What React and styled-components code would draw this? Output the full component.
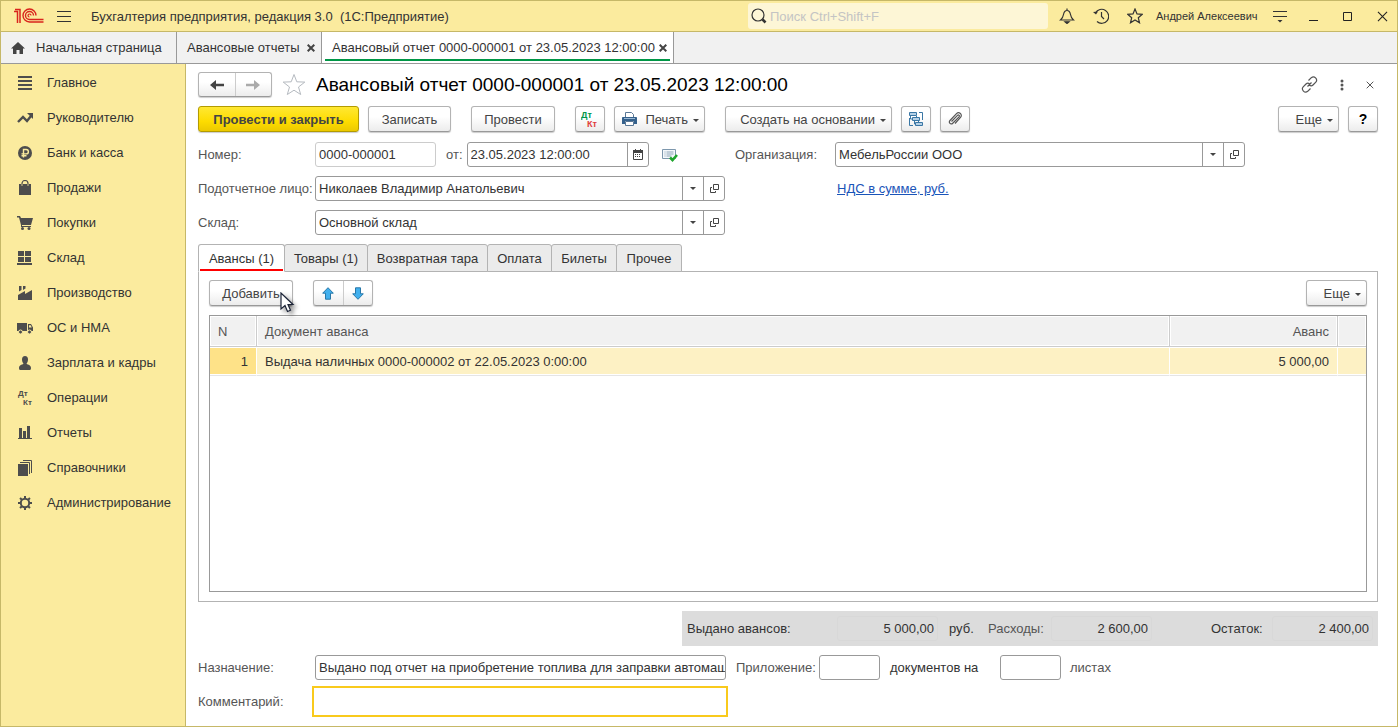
import React from "react";
import styled, { createGlobalStyle } from "styled-components";

const sections = [
    { icon: "list", title: "Главное" },
    { icon: "trend", title: "Руководителю" },
    { icon: "ruble", title: "Банк и касса" },
    { icon: "bag", title: "Продажи" },
    { icon: "cart", title: "Покупки" },
    { icon: "boxes", title: "Склад" },
    { icon: "factory", title: "Производство" },
    { icon: "truck", title: "ОС и НМА" },
    { icon: "person", title: "Зарплата и кадры" },
    { icon: "dtkt", title: "Операции" },
    { icon: "bars", title: "Отчеты" },
    { icon: "books", title: "Справочники" },
    { icon: "gear", title: "Администрирование" },
];

const documentTabs = [
    { title: "Авансы (1)", width: 87 },
    { title: "Товары (1)", width: 84 },
    { title: "Возвратная тара", width: 121 },
    { title: "Оплата", width: 65 },
    { title: "Билеты", width: 66 },
    { title: "Прочее", width: 66 },
];

const advances = [
    {
        no: 1,
        title: "Выдача наличных 0000-000002 от 22.05.2023 0:00:00",
        sum: "5 000,00",
    },
];

const SectionIcon = ({ name }) => {
    const shapes = {
        list: <path d="M1 1h14v2H1zM1 5h14v2H1zM1 9h14v2H1zM1 13h14v2H1z" />,
        trend: (
            <>
                <path
                    d="M1 12l5-5 4 4 4-5"
                    fill="none"
                    stroke="#4d4d4d"
                    strokeWidth="2.4"
                />
                <path d="M10 3h6v6z" />
            </>
        ),
        ruble: (
            <>
                <circle cx="8" cy="8" r="7" />
                <path
                    d="M6.5 12.5V4.5h2.7a2.2 2.2 0 010 4.4H4.5M4.5 10.8h5"
                    fill="none"
                    stroke="#fbeb9e"
                    strokeWidth="1.4"
                />
            </>
        ),
        bag: (
            <>
                <path d="M2 4h2v2h2V4h4v2h2V4h2v11H2z" />
                <path
                    d="M5 6V3.500a3 3 0 016 0V6"
                    fill="none"
                    stroke="#4d4d4d"
                    strokeWidth="1.2"
                />
            </>
        ),
        cart: (
            <>
                <path d="M0 1h3l1 2h12l-2 7H5v1h9v1H4V10L2 2.500H0z" />
                <circle cx="5.500" cy="13.500" r="1.500" />
                <circle cx="12" cy="13.500" r="1.500" />
            </>
        ),
        boxes: <path d="M1 1h6v5H1zM8 1h6v5H8zM1 7h6v5H1zM8 7h6v5H8zM0 13h15v2H0z" />,
        factory: (
            <path d="M1 15v-5l7-4v3l7-4v10zM2 1h2.500v4L2 6.500zM6 1h2.500v2.500L6 5z" />
        ),
        truck: (
            <>
                <path d="M0 3h10v8H0zM11 4h3l2 3.500V11h-5z" />
                <path d="M12 5.200h1.700l1 2.300H12z" fill="#fbeb9e" />
                <circle
                    cx="3.500"
                    cy="12"
                    r="2"
                    stroke="#fbeb9e"
                    strokeWidth="1"
                />
                <circle
                    cx="12.500"
                    cy="12"
                    r="2"
                    stroke="#fbeb9e"
                    strokeWidth="1"
                />
            </>
        ),
        person: (
            <path d="M8 1c2 0 3 1.500 3 3.500S10 8.300 9.500 8.600c0 1 4.500 1 4.500 4.400 0 1-.5 2-1 2H3c-.5 0-1-1-1-2 0-3.400 4.500-3.400 4.500-4.400C6 8.300 5 6.500 5 4.500S6 1 8 1z" />
        ),
        bars: <path d="M2 3h3v10H2zM6 6h3v7H6zM10 1h3v12h-3zM1 13h14v1H1z" />,
        books: (
            <>
                <path d="M1 4h10v12H1z" />
                <path
                    d="M3 2.500h9.500V14M6 .5h8.500V13"
                    fill="none"
                    stroke="#4d4d4d"
                />
            </>
        ),
        gear: (
            <>
                <circle
                    cx="8"
                    cy="8"
                    r="4.200"
                    fill="none"
                    stroke="#4d4d4d"
                    strokeWidth="2"
                />
                {[0, 45, 90, 135, 180, 225, 270, 315].map((angle) => (
                    <path
                        key={angle}
                        d="M7 1h2v2.500H7z"
                        transform={`rotate(${angle} 8 8)`}
                    />
                ))}
            </>
        ),
    };

    if (name === "dtkt") {
        return (
            <SectionSvg viewBox="0 0 16 16">
                <text x="1" y="6">
                    Дт
                </text>
                <text x="6" y="15">
                    Кт
                </text>
            </SectionSvg>
        );
    }
    return <SectionSvg viewBox="0 0 16 16">{shapes[name]}</SectionSvg>;
};

const Logo = () => (
    <svg width="30" height="16" viewBox="0 0 30 16" fill="none" stroke="#d9251d">
        <path d="M0 3.500h3.500V15M1 1.500h5V15" strokeWidth="1.500" />
        <path
            d="M22 7.500A6.500 6.500 0 1015.500 14H29.500M19.500 7.500A4 4 0 1015.500 11.500H29.500"
            strokeWidth="1.400"
        />
        <path d="M17 7.500a1.500 1.500 0 10-1.500 1.500" strokeWidth="1.200" />
    </svg>
);

const OpenIcon = () => (
    <svg width="11" height="11" viewBox="0 0 11 11" fill="none" stroke="#444">
        <path d="M4.500 1.500h5v5h-5zM3 4.500H1.500v5h5V8" />
    </svg>
);

const Caret = () => (
    <svg width="6" height="3" viewBox="0 0 6 3">
        <path d="M0 0h6L3 3z" fill="#444" />
    </svg>
);

const CloseIcon = ({ size = 8, weight = 2, color = "#444" }) => (
    <svg width={size} height={size} viewBox="0 0 8 8">
        <path d="M.7.7l6.600 6.600M7.300.7L.7 7.300" stroke={color} strokeWidth={weight} />
    </svg>
);

const LookupField = ({ id, value, label }) => (
    <FieldBox>
        <FieldInput id={id} defaultValue={value} />
        <FieldButton type="button" aria-label={`${label}: выбрать`}>
            <Caret />
        </FieldButton>
        <FieldButton type="button" aria-label={`${label}: открыть`}>
            <OpenIcon />
        </FieldButton>
    </FieldBox>
);

const TitleBar = () => (
    <TitleBarBlock>
        <Logo />
        <IconButton type="button" aria-label="Меню">
            <svg width="14" height="13" viewBox="0 0 14 13" stroke="#333">
                <path d="M0 1.500h14M0 6.500h14M0 11.500h14" />
            </svg>
        </IconButton>
        <AppTitle>Бухгалтерия предприятия, редакция 3.0&nbsp; (1С:Предприятие)</AppTitle>
        <SearchBox>
            <svg width="16" height="16" viewBox="0 0 16 16" fill="none" stroke="#333">
                <circle cx="7" cy="7" r="6" strokeWidth="1.200" />
                <path d="M11.500 11.500l3 3" strokeWidth="2.600" />
            </svg>
            <input type="text" aria-label="Поиск" placeholder="Поиск Ctrl+Shift+F" />
        </SearchBox>
        <TitleIcons>
            <IconButton type="button" aria-label="Уведомления">
                <svg width="16" height="16" viewBox="0 0 16 16" fill="none" stroke="#333" strokeWidth="1.200">
                    <path d="M8 .5v2M1.500 12h13c-2-1.800-2.600-3-3-5.500C11 3.800 9.500 2.500 8 2.500S5 3.800 4.500 6.500C4.100 9 3.500 10.200 1.500 12z" />
                    <path d="M6 13.800h4L8 15.500z" fill="#333" />
                </svg>
            </IconButton>
            <IconButton type="button" aria-label="История">
                <svg width="16" height="16" viewBox="0 0 16 16" fill="none" stroke="#333" strokeWidth="1.200">
                    <path d="M2.500 5A7 7 0 114 13.500M8.500 4v4.500l2.500 2.500" />
                    <path d="M0 4l5-.5-2 3z" fill="#333" stroke="none" />
                </svg>
            </IconButton>
            <IconButton type="button" aria-label="Избранное">
                <svg width="16" height="16" viewBox="0 0 16 16" fill="none" stroke="#333" strokeWidth="1.200">
                    <path d="M8 1l2 4.900 5.300.4-4 3.400 1.200 5.100L8 12l-4.500 2.800 1.200-5.100-4-3.400 5.300-.4z" />
                </svg>
            </IconButton>
            <UserName>Андрей Алексеевич</UserName>
            <IconButton type="button" aria-label="Настройки">
                <svg width="14" height="14" viewBox="0 0 14 14" stroke="#333">
                    <path d="M0 2.500h14M0 7.500h14" />
                    <path d="M4.500 11h5L7 13.500z" fill="#333" stroke="none" />
                </svg>
            </IconButton>
        </TitleIcons>
        <WindowButtons>
            <IconButton type="button" aria-label="Свернуть">
                <svg width="10" height="10" viewBox="0 0 10 10" stroke="#222">
                    <path d="M0 9.500h9" />
                </svg>
            </IconButton>
            <IconButton type="button" aria-label="Развернуть">
                <svg width="10" height="10" viewBox="0 0 10 10" fill="none" stroke="#222">
                    <path d="M.5 1.500h8v8h-8z" />
                </svg>
            </IconButton>
            <IconButton type="button" aria-label="Закрыть окно">
                <CloseIcon size={11} weight={0.8} color="#222" />
            </IconButton>
        </WindowButtons>
    </TitleBarBlock>
);

const OpenWindows = () => (
    <OpenWindowsBlock>
        <WindowTab $home $width={176}>
            <svg width="14" height="12" viewBox="0 0 14 12" fill="#444">
                <path d="M7 0l7 6.500h-2V12H8.500V8h-3v4H2V6.500H0z" />
            </svg>
            <button type="button">Начальная страница</button>
        </WindowTab>
        <WindowTab $width={145}>
            <button type="button">Авансовые отчеты</button>
            <IconButton type="button" aria-label="Закрыть вкладку">
                <CloseIcon />
            </IconButton>
        </WindowTab>
        <WindowTab $active $width={352}>
            <button type="button">Авансовый отчет 0000-000001 от 23.05.2023 12:00:00</button>
            <IconButton type="button" aria-label="Закрыть вкладку">
                <CloseIcon />
            </IconButton>
        </WindowTab>
    </OpenWindowsBlock>
);

const DocumentHeader = () => (
    <HeaderBlock>
        <ButtonPair>
            <button type="button" aria-label="Назад">
                <svg width="14" height="12" viewBox="0 0 14 12">
                    <path d="M0 6l6-5v3.800h8v2.400H6V11z" fill="#444" />
                </svg>
            </button>
            <button type="button" aria-label="Вперед">
                <svg width="14" height="12" viewBox="0 0 14 12">
                    <path d="M14 6L8 1v3.800H0v2.400h8V11z" fill="#aaa" />
                </svg>
            </button>
        </ButtonPair>
        <IconButton type="button" aria-label="В избранное">
            <svg width="24" height="23" viewBox="0 0 24 23" fill="none" stroke="#b5bac0">
                <path d="M12 1.500l2.800 7.300 8 .3-6.300 4.900 2.200 7.500L12 17.200l-6.700 4.300L7.500 14 1.200 9.100l8-.3z" />
            </svg>
        </IconButton>
        <h1>Авансовый отчет 0000-000001 от 23.05.2023 12:00:00</h1>
        <HeaderActions>
            <IconButton type="button" aria-label="Ссылка">
                <svg width="17" height="17" viewBox="0 0 17 17" fill="none" stroke="#555" strokeWidth="1.200">
                    <path d="M7.500 4.500l2.800-2.800a3.200 3.200 0 014.500 4.500L12 9c-1 1-2.500 1-3.500.3M9.500 12.500l-2.800 2.800a3.200 3.200 0 01-4.500-4.500L5 8c1-1 2.500-1 3.500-.3M6.500 10.500l4-4" />
                </svg>
            </IconButton>
            <IconButton type="button" aria-label="Еще действия">
                <svg width="4" height="12" viewBox="0 0 4 12" fill="#555">
                    <circle cx="2" cy="2" r="1.500" />
                    <circle cx="2" cy="6" r="1.500" />
                    <circle cx="2" cy="10" r="1.500" />
                </svg>
            </IconButton>
            <IconButton type="button" aria-label="Закрыть документ">
                <CloseIcon weight={1} color="#555" />
            </IconButton>
        </HeaderActions>
    </HeaderBlock>
);

const CommandBar = () => (
    <CommandBarBlock>
        <ButtonGroup>
            <Button type="button" $primary $width={161}>
                Провести и закрыть
            </Button>
            <Button type="button" $width={83}>
                Записать
            </Button>
        </ButtonGroup>
        <Button type="button" $width={84}>
            Провести
        </Button>
        <ButtonGroup>
            <Button type="button" $width={30} aria-label="Дт Кт">
                <DtKtSvg viewBox="0 0 18 17">
                    <text x="0" y="7" fill="#00964a">
                        Дт
                    </text>
                    <text x="6" y="16" fill="#e03c3c">
                        Кт
                    </text>
                </DtKtSvg>
            </Button>
            <MenuButton type="button" $width={91}>
                <svg width="15" height="15" viewBox="0 0 15 15">
                    <path d="M3.500 5V.5h6l2 2V5" fill="#fff" stroke="#5a7896" />
                    <path d="M0 5.500Q0 5 1 5h13q1 0 1 .5V12h-3V9H3v3H0z" fill="#35618c" />
                    <path d="M2 6.500h11" stroke="#9ab8d4" />
                    <path d="M3.500 9.500h8v4h-8z" fill="#fff" stroke="#5a7896" />
                </svg>
                <span>Печать</span>
                <Caret />
            </MenuButton>
        </ButtonGroup>
        <ButtonGroup>
            <MenuButton type="button" $width={167}>
                <span>Создать на основании</span>
                <Caret />
            </MenuButton>
            <Button type="button" $width={30} aria-label="Структура подчиненности">
                <svg width="16" height="16" viewBox="0 0 16 16" fill="#b5d0e6" stroke="#3a77a5">
                    <path d="M1.500 1.500h7v3h-7zM4.500 6.500h7v3h-7zM7.500 11.500h7v3h-7z" />
                    <path d="M11 1.500h3.500V9M1.500 7v7.500H5M2.500 5v3H4M8.500 5v1.500M6.500 10v3H7M10.500 10v1.500" fill="none" />
                </svg>
            </Button>
            <Button type="button" $width={30} aria-label="Присоединенные файлы">
                <svg width="16" height="16" viewBox="0 0 16 16" fill="none" stroke="#555" strokeWidth="1.200">
                    <path d="M4.500 10.500l6-6.200c1-1 2.500.4 1.500 1.500l-6.500 6.700c-1.500 1.500-4.300-1-2.500-3l6.500-6.800c2.500-2.500 6.500.8 4 3.600L8 12.500" />
                </svg>
            </Button>
        </ButtonGroup>
        <ButtonGroup $right>
            <MenuButton type="button" $width={61}>
                <span>Еще</span>
                <Caret />
            </MenuButton>
            <Button type="button" $width={30} $dark>
                ?
            </Button>
        </ButtonGroup>
    </CommandBarBlock>
);

const DocumentFields = () => (
    <FieldsGrid>
        <FieldRow>
            <Label htmlFor="number">Номер:</Label>
            <FieldBox $width={121} $muted>
                <FieldInput id="number" defaultValue="0000-000001" readOnly />
            </FieldBox>
            <InlineLabel htmlFor="date">от:</InlineLabel>
            <FieldBox $width={182}>
                <FieldInput id="date" defaultValue="23.05.2023 12:00:00" />
                <FieldButton type="button" aria-label="Календарь">
                    <svg width="10" height="11" viewBox="0 0 10 11">
                        <path d="M.5 1.500h9v9h-9z" fill="#fff" stroke="#444" />
                        <path d="M0 1h10v3H0zM2 0h1v2H2zM7 0h1v2H7z" fill="#444" />
                        <path d="M2 5.500h6M2 7.500h6" stroke="#444" strokeDasharray="1 1" />
                    </svg>
                </FieldButton>
            </FieldBox>
            <PostedIcon width="16" height="14" viewBox="0 0 16 14" fill="none">
                <path d="M.5 1.500h13v9H.5z" fill="#f4f8fb" stroke="#7d97ad" />
                <path d="M2.500 4h1M4.500 4h7M2.500 6h1M4.500 6h7M2.500 8h1M4.500 8h5" stroke="#8da5b8" />
                <path d="M8 9.500l2.500 2.500 4.500-5" stroke="#1fa52d" strokeWidth="2.600" />
            </PostedIcon>
        </FieldRow>
        <FieldRow>
            <Label htmlFor="company" $width={100}>
                Организация:
            </Label>
            <LookupField id="company" label="Организация" value="МебельРоссии ООО" />
        </FieldRow>
        <FieldRow>
            <Label htmlFor="person">Подотчетное лицо:</Label>
            <LookupField id="person" label="Подотчетное лицо" value="Николаев Владимир Анатольевич" />
        </FieldRow>
        <LinkCell>
            <a href="#vat">НДС в сумме, руб.</a>
        </LinkCell>
        <FieldRow>
            <Label htmlFor="store">Склад:</Label>
            <LookupField id="store" label="Склад" value="Основной склад" />
        </FieldRow>
    </FieldsGrid>
);

const AdvancesPanel = () => (
    <>
        <TabList role="tablist">
            {documentTabs.map((tab, index) => (
                <Tab
                    key={tab.title}
                    type="button"
                    role="tab"
                    aria-selected={index === 0}
                    $active={index === 0}
                    $width={tab.width}
                >
                    {tab.title}
                </Tab>
            ))}
        </TabList>
        <Panel role="tabpanel">
            <PanelBar>
                <AddButtonBox>
                    <Button type="button" $width={84}>
                        Добавить
                    </Button>
                    <Pointer width="22" height="26" viewBox="0 0 22 26">
                        <path d="M1 1v16l4-3.500 2.500 6 3-1.300-2.500-5.700h5z" fill="#fff" stroke="#1c2438" strokeWidth="1.200" />
                    </Pointer>
                </AddButtonBox>
                <ButtonPair $tall>
                    <button type="button" aria-label="Переместить вверх">
                        <svg width="12" height="13" viewBox="0 0 12 13">
                            <path d="M6 .7l5.300 5.500H8.500v6h-5v-6H.7z" fill="#41b0ee" stroke="#2877a8" />
                        </svg>
                    </button>
                    <button type="button" aria-label="Переместить вниз">
                        <svg width="12" height="13" viewBox="0 0 12 13">
                            <path d="M6 12.300L.7 6.800h2.800v-6h5v6h2.800z" fill="#41b0ee" stroke="#2877a8" />
                        </svg>
                    </button>
                </ButtonPair>
                <ButtonGroup $right>
                    <MenuButton type="button" $width={61}>
                        <span>Еще</span>
                        <Caret />
                    </MenuButton>
                </ButtonGroup>
            </PanelBar>
            <TableFrame>
                <AdvancesTable>
                    <colgroup>
                        <col width="47" />
                        <col />
                        <col width="168" />
                        <col width="28" />
                    </colgroup>
                    <thead>
                        <tr>
                            <th>N</th>
                            <th>Документ аванса</th>
                            <th className="sum">Аванс</th>
                            <th aria-label="Пусто" />
                        </tr>
                    </thead>
                    <tbody>
                        {advances.map((data) => (
                            <tr key={data.no}>
                                <td className="number">{data.no}</td>
                                <td>{data.title}</td>
                                <td className="sum">{data.sum}</td>
                                <td />
                            </tr>
                        ))}
                    </tbody>
                </AdvancesTable>
            </TableFrame>
        </Panel>
    </>
);

const Totals = () => (
    <TotalsBlock>
        <TotalLabel htmlFor="issued" $width={150} $dark>
            Выдано авансов:
        </TotalLabel>
        <TotalInput id="issued" value="5 000,00" readOnly />
        <TotalUnit>руб.</TotalUnit>
        <TotalLabel htmlFor="spent" $width={63}>
            Расходы:
        </TotalLabel>
        <TotalInput id="spent" value="2 600,00" readOnly />
        <TotalLabel htmlFor="rest" $width={61} $dark $apart>
            Остаток:
        </TotalLabel>
        <TotalInput id="rest" value="2 400,00" readOnly />
    </TotalsBlock>
);

const App = () => (
    <Window>
        <GlobalStyle />
        <TitleBar />
        <OpenWindows />
        <Workspace>
            <Sidebar>
                {sections.map((section) => (
                    <a key={section.title} href="#section">
                        <SectionIcon name={section.icon} />
                        {section.title}
                    </a>
                ))}
            </Sidebar>
            <Document>
                <DocumentHeader />
                <CommandBar />
                <DocumentFields />
                <AdvancesPanel />
                <Totals />
                <FieldRow>
                    <Label htmlFor="purpose">Назначение:</Label>
                    <FieldBox $width={411}>
                        <FieldInput
                            id="purpose"
                            $long
                            defaultValue="Выдано под отчет на приобретение топлива для заправки автомаш"
                        />
                    </FieldBox>
                    <AttachmentLabel htmlFor="documents">Приложение:</AttachmentLabel>
                    <FieldBox $width={61}>
                        <FieldInput id="documents" />
                    </FieldBox>
                    <SheetsLabel htmlFor="sheets">документов на</SheetsLabel>
                    <FieldBox $width={61}>
                        <FieldInput id="sheets" />
                    </FieldBox>
                    <SheetsUnit>листах</SheetsUnit>
                </FieldRow>
                <CommentRow>
                    <Label htmlFor="comment" $width={114}>
                        Комментарий:
                    </Label>
                    <input id="comment" type="text" />
                </CommentRow>
            </Document>
        </Workspace>
    </Window>
);

const GlobalStyle = createGlobalStyle`
    * {
        box-sizing: border-box;
    }

    body {
        margin: 0;
    }

    body,
    button,
    input {
        font-family: "Liberation Sans", Arial, sans-serif;
        font-size: 13px;
        color: #333;
    }

    svg {
        display: block;
        flex-shrink: 0;
    }
`;

const Window = styled.div`
    display: flex;
    flex-direction: column;
    min-height: 100vh;
    border: 1px solid #c6b868;
    background-color: white;
`;

const IconButton = styled.button`
    display: flex;
    align-items: center;
    justify-content: center;
    padding: 0;
    border: none;
    background: none;
    cursor: pointer;
`;

const TitleBarBlock = styled.header`
    display: flex;
    align-items: center;
    height: 31px;
    padding: 0 9px 0 13px;
    background-color: #fbeb9e;
    border-bottom: 1px solid #c6b868;

    > button {
        margin-left: 13px;
    }
`;

const AppTitle = styled.div`
    flex: 1;
    margin-left: 20px;
    white-space: nowrap;
`;

const SearchBox = styled.div`
    display: flex;
    align-items: center;
    width: 300px;
    height: 26px;
    padding: 0 3px;
    background-color: #fdf6d6;
    border-radius: 3px;

    input {
        flex: 1;
        min-width: 0;
        padding: 0 3px;
        border: none;
        outline: none;
        background: none;
    }

    input::placeholder {
        color: #c4c4c4;
    }
`;

const TitleIcons = styled.div`
    display: flex;
    align-items: center;
    gap: 18px;
    margin-left: 11px;
`;

const UserName = styled.div`
    width: 104px;
    margin: 0 -5px;
    font-size: 11px;
    white-space: nowrap;
`;

const WindowButtons = styled.div`
    display: flex;
    align-items: center;
    gap: 24px;
    margin-left: 22px;
`;

const OpenWindowsBlock = styled.nav`
    display: flex;
    height: 32px;
    background-color: #f1f1f1;
    border-bottom: 1px solid #999;
`;

const WindowTab = styled.div`
    position: relative;
    display: flex;
    align-items: center;
    gap: ${(props) => (props.$home ? "11px" : "4px")};
    min-width: ${(props) => props.$width}px;
    padding: 0 6px 0 10px;
    border-right: 1px solid #999;
    background-color: ${(props) => (props.$active ? "white" : "transparent")};
    white-space: nowrap;

    button:first-of-type {
        padding: 0;
        border: none;
        background: none;
        cursor: pointer;
    }

    button + button {
        margin-left: auto;
    }

    ${(props) =>
        props.$active &&
        `
        &::after {
            content: "";
            position: absolute;
            left: 3px;
            right: 3px;
            bottom: 2px;
            height: 2px;
            background-color: #009646;
        }
    `}
`;

const Workspace = styled.div`
    display: flex;
    flex: 1;
`;

const Sidebar = styled.nav`
    flex: 0 0 185px;
    padding-top: 1px;
    background-color: #fbeb9e;
    border-right: 1px solid #c6b868;

    a {
        display: flex;
        align-items: center;
        gap: 14px;
        height: 35px;
        padding-left: 16px;
        color: #333;
        text-decoration: none;
        white-space: nowrap;
    }
`;

const SectionSvg = styled.svg`
    width: 16px;
    height: 16px;
    fill: #4d4d4d;

    text {
        font-size: 8px;
        font-weight: bold;
    }
`;

const DtKtSvg = styled.svg`
    width: 18px;
    height: 17px;

    text {
        font-size: 9px;
        font-weight: bold;
    }
`;

const Document = styled.main`
    display: flex;
    flex: 1;
    flex-direction: column;
    min-width: 0;
    padding: 8px 19px 9px 12px;
`;

const HeaderBlock = styled.div`
    display: flex;
    align-items: center;
    height: 25px;

    > button {
        margin-left: 10px;
    }

    h1 {
        margin: 0 0 0 10px;
        font-size: 19px;
        font-weight: normal;
        color: black;
        white-space: nowrap;
    }
`;

const HeaderActions = styled.div`
    display: flex;
    align-items: center;
    gap: 22px;
    margin-left: auto;
    padding-right: 4px;
`;

const buttonFace = `
    border: 1px solid #b3b3b3;
    border-bottom-color: #999;
    border-radius: 3px;
    background: linear-gradient(#fff 40%, #ececec);
    box-shadow: 0 1px 1px #ccc;
`;

const ButtonPair = styled.div`
    display: flex;
    width: ${(props) => (props.$tall ? "60px" : "74px")};
    height: ${(props) => (props.$tall ? "26px" : "25px")};
    ${buttonFace}

    button {
        display: flex;
        flex: 1;
        align-items: center;
        justify-content: center;
        padding: 0;
        border: none;
        background: none;
        cursor: pointer;
    }

    button + button {
        border-left: 1px solid #ccc;
    }
`;

const CommandBarBlock = styled.div`
    display: flex;
    gap: 20px;
    margin-top: 9px;
`;

const ButtonGroup = styled.div`
    display: flex;
    gap: 9px;
    margin-left: ${(props) => (props.$right ? "auto" : "0")};
`;

const Button = styled.button`
    display: flex;
    align-items: center;
    justify-content: center;
    min-width: ${(props) => props.$width}px;
    height: 26px;
    padding: 0 5px;
    ${buttonFace}
    color: #444;
    white-space: nowrap;
    cursor: pointer;

    ${(props) =>
        props.$dark && "color: black; font-size: 14px; font-weight: bold;"}

    ${(props) =>
        props.$primary &&
        `
        border-color: #b39b00;
        background: linear-gradient(#ffe833, #fddc00 60%, #ecc900);
        font-weight: bold;
    `}
`;

const MenuButton = styled(Button)`
    justify-content: flex-end;
    gap: 5px;

    span {
        margin-left: 3px;
    }

    svg:last-child {
        margin-top: 3px;
    }
`;

const FieldsGrid = styled.div`
    display: grid;
    grid-template-columns: 527px minmax(0, 1fr);
    gap: 9px 10px;
    margin-top: 10px;
`;

const FieldRow = styled.div`
    display: flex;
    align-items: center;
    height: 25px;
`;

const Label = styled.label`
    flex: 0 0 ${(props) => props.$width || 117}px;
    color: #555;
    white-space: nowrap;
`;

const InlineLabel = styled.label`
    padding: 0 4px 0 10px;
    color: #555;
`;

const FieldBox = styled.div`
    display: flex;
    flex: 0 1 ${(props) => props.$width || 410}px;
    height: 25px;
    min-width: 0;
    border: 1px solid ${(props) => (props.$muted ? "#ccc" : "#999")};
    border-radius: 3px;
    background-color: white;
`;

const FieldInput = styled.input`
    flex: 1;
    width: 100%;
    min-width: 0;
    padding: 0 ${(props) => (props.$long ? "0" : "3px")} 0 3px;
    border: none;
    outline: none;
    background: none;
`;

const FieldButton = styled.button`
    display: flex;
    flex: 0 0 21px;
    align-items: center;
    justify-content: center;
    padding: 0;
    border: none;
    border-left: 1px solid #999;
    background: none;
    cursor: pointer;
`;

const PostedIcon = styled.svg`
    margin-left: 13px;
`;

const LinkCell = styled.div`
    display: flex;
    align-items: center;
    padding-left: 102px;

    a {
        color: #1a54b8;
    }
`;

const TabList = styled.div`
    display: flex;
    height: 28px;
    margin-top: 9px;
    margin-bottom: -1px;
`;

const Tab = styled.button`
    position: relative;
    min-width: ${(props) => props.$width}px;
    padding: 0 8px;
    border: 1px solid #b3b3b3;
    border-bottom-color: ${(props) => (props.$active ? "white" : "#b3b3b3")};
    border-radius: 3px 3px 0 0;
    background-color: ${(props) => (props.$active ? "white" : "#ebebeb")};
    white-space: nowrap;
    cursor: pointer;

    & + & {
        margin-left: -1px;
    }

    ${(props) =>
        props.$active &&
        `
        z-index: 1;

        &::after {
            content: "";
            position: absolute;
            left: 1px;
            right: 1px;
            bottom: 0;
            height: 2px;
            background-color: #f00;
        }
    `}
`;

const Panel = styled.section`
    display: flex;
    flex: 1;
    flex-direction: column;
    padding: 8px 10px 9px;
    border: 1px solid #b3b3b3;
`;

const PanelBar = styled.div`
    display: flex;
    gap: 20px;
`;

const AddButtonBox = styled.div`
    position: relative;
`;

const Pointer = styled.svg`
    position: absolute;
    top: 12px;
    left: 71px;
    filter: drop-shadow(3px 3px 2px rgba(0, 0, 0, 0.4));
    pointer-events: none;
`;

const TableFrame = styled.div`
    flex: 1;
    margin-top: 9px;
    border: 1px solid #999;
`;

const AdvancesTable = styled.table`
    width: 100%;
    border-spacing: 0;
    table-layout: fixed;

    th,
    td {
        padding: 0 8px;
        text-align: left;
        white-space: nowrap;
    }

    th {
        height: 31px;
        background-color: #f1f1f1;
        border-right: 1px solid #ccc;
        border-bottom: 1px solid #ccc;
        box-shadow: inset 0 0 0 1px white;
        font-weight: normal;
        color: #555;
    }

    td {
        height: 29px;
        background-color: #fdf1c4;
        border-right: 1px solid white;
        border-bottom: 1px solid #e5e5e5;
        box-shadow: inset 0 1px 0 white, inset 0 -1px 0 white;
    }

    th:last-child,
    td:last-child {
        border-right: none;
    }

    .sum {
        text-align: right;
    }

    .number {
        background-color: #fee288;
        text-align: right;
    }
`;

const TotalsBlock = styled.div`
    display: flex;
    align-items: center;
    align-self: flex-end;
    width: 696px;
    max-width: 100%;
    height: 35px;
    margin: 9px 0;
    padding: 0 5px;
    background-color: #dcdcdc;
`;

const TotalLabel = styled.label`
    flex: 0 0 ${(props) => props.$width}px;
    margin-left: ${(props) => (props.$apart ? "auto" : "0")};
    color: ${(props) => (props.$dark ? "#333" : "#555")};
`;

const TotalInput = styled.input`
    width: 101px;
    height: 25px;
    padding: 0 3px;
    border: 1px solid #d8d8d8;
    border-radius: 3px;
    outline: none;
    background: none;
    text-align: right;
`;

const TotalUnit = styled.span`
    width: 50px;
    padding-left: 11px;
`;

const AttachmentLabel = styled.label`
    flex: 0 0 93px;
    padding-left: 10px;
    color: #555;
`;

const SheetsLabel = styled.label`
    flex: 0 0 120px;
    padding-left: 10px;
`;

const SheetsUnit = styled.span`
    padding-left: 9px;
    color: #555;
`;

const CommentRow = styled.div`
    display: flex;
    align-items: center;
    margin-top: 6px;

    input {
        flex: 0 1 416px;
        min-width: 0;
        height: 31px;
        padding: 0 4px;
        border: 2px solid #f9ca1c;
        outline: none;
    }
`;

export default App;
